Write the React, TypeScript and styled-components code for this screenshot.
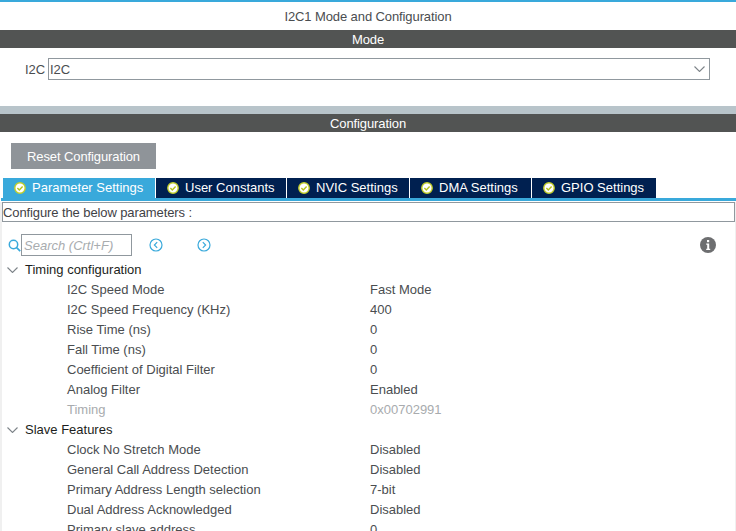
import styled, { createGlobalStyle } from "styled-components";

const GlobalStyle = createGlobalStyle`
    html, body {
        margin: 0;
        padding: 0;
        background: white;
    }
    body {
        font-family: "Liberation Sans", Arial, sans-serif;
        font-size: 13px;
        overflow: hidden;
    }
`

const tabs = [
    { label: "Parameter Settings", width: 152 },
    { label: "User Constants", width: 130 },
    { label: "NVIC Settings", width: 122 },
    { label: "DMA Settings", width: 121 },
    { label: "GPIO Settings", width: 124 },
];

const timingRows = [
    { name: "I2C Speed Mode", value: "Fast Mode" },
    { name: "I2C Speed Frequency (KHz)", value: "400" },
    { name: "Rise Time (ns)", value: "0" },
    { name: "Fall Time (ns)", value: "0" },
    { name: "Coefficient of Digital Filter", value: "0" },
    { name: "Analog Filter", value: "Enabled" },
    { name: "Timing", value: "0x00702991", muted: true },
];

const slaveRows = [
    { name: "Clock No Stretch Mode", value: "Disabled" },
    { name: "General Call Address Detection", value: "Disabled" },
    { name: "Primary Address Length selection", value: "7-bit" },
    { name: "Dual Address Acknowledged", value: "Disabled" },
    { name: "Primary slave address", value: "0" },
];

function CheckIcon() {
    return (
        <svg width="12" height="12" viewBox="0 0 12 12">
            <circle cx="6" cy="6" r="5.2" fill="white" stroke="#c3cf2a" strokeWidth="1.4" />
            <path d="M3.4 6l1.9 1.9 3.3-3.4" fill="none" stroke="#b5c21a" strokeWidth="1.4" />
        </svg>
    )
}

function Chevron() {
    return (
        <svg width="11" height="6" viewBox="0 0 11 6">
            <path d="M.5.5l5 5 5-5" fill="none" stroke="#7d8489" strokeWidth="1.1" />
        </svg>
    )
}

function NavIcon(props: { direction: "left" | "right" }) {
    return (
        <svg width="14" height="14" viewBox="0 0 14 14">
            <circle cx="7" cy="7" r="6" fill="none" stroke="#39a9db" strokeWidth="1.2" />
            <path d={props.direction === "left" ? "M8.2 4.2L5.4 7l2.8 2.8" : "M5.8 4.2L8.6 7l-2.8 2.8"} fill="none" stroke="#39a9db" strokeWidth="1.2" />
        </svg>
    )
}

function TreeGroup(props: { title: string, rows: { name: string, value: string, muted?: boolean }[] }) {
    return (
        <>
            <GroupRow>
                <GroupArrow><Chevron /></GroupArrow>
                {props.title}
            </GroupRow>
            {props.rows.map(row => (
                <ParamRow key={row.name} $muted={row.muted}>
                    <ParamName>{row.name}</ParamName>
                    <span>{row.value}</span>
                </ParamRow>
            ))}
        </>
    )
}

export default function App() {
    return (
        <Page>
            <GlobalStyle />
            <Title>I2C1 Mode and Configuration</Title>
            <SectionBar>Mode</SectionBar>
            <ModeRow>
                <ModeLabel>I2C</ModeLabel>
                <ModeSelect>
                    I2C
                    <Chevron />
                </ModeSelect>
            </ModeRow>
            <Divider />
            <SectionBar>Configuration</SectionBar>
            <ResetButton>Reset Configuration</ResetButton>
            <TabBar>
                {tabs.map((tab, i) => (
                    <Tab key={tab.label} $active={i === 0} $width={tab.width}>
                        <CheckIcon />
                        {tab.label}
                    </Tab>
                ))}
            </TabBar>
            <Panel>
                <HintBox>Configure the below parameters :</HintBox>
                <SearchRow>
                    <svg width="13" height="13" viewBox="0 0 13 13">
                        <circle cx="5.5" cy="5.5" r="4.2" fill="none" stroke="#39a9db" strokeWidth="1.5" />
                        <path d="M8.6 8.6l3.6 3.6" stroke="#39a9db" strokeWidth="1.7" />
                    </svg>
                    <SearchBox>Search (Crtl+F)</SearchBox>
                    <NavButtons>
                        <NavIcon direction="left" />
                        <NavIcon direction="right" />
                    </NavButtons>
                    <InfoIcon>
                        <svg width="16" height="16" viewBox="0 0 16 16">
                            <circle cx="8" cy="8" r="8" fill="#6d6e70" />
                            <rect x="7" y="3" width="2.2" height="2.2" fill="white" />
                            <path d="M6.2 6.6h3v5.2h1v1.2H6.2v-1.2h1V7.8h-1z" fill="white" />
                        </svg>
                    </InfoIcon>
                </SearchRow>
                <TreeGroup title="Timing configuration" rows={timingRows} />
                <TreeGroup title="Slave Features" rows={slaveRows} />
            </Panel>
        </Page>
    )
}

const Page = styled.div`
    width: 736px;
    height: 531px;
    overflow: hidden;
    box-sizing: border-box;
    border-top: 2px solid #39a9db;
    color: #4a4d50;
    background: white;
`

const Title = styled.div`
    height: 28px;
    line-height: 29px;
    text-align: center;
    letter-spacing: -0.1px;
`

const SectionBar = styled.div`
    height: 18px;
    line-height: 19px;
    background: #525453;
    color: white;
    text-align: center;
    letter-spacing: -0.1px;
`

const ModeRow = styled.div`
    height: 58px;
    display: flex;
    align-items: flex-start;
    padding: 10px 26px 0 25px;
    box-sizing: border-box;
`

const ModeLabel = styled.span`
    width: 23px;
    line-height: 23px;
`

const ModeSelect = styled.div`
    flex: 1;
    height: 22px;
    box-sizing: border-box;
    border: 1px solid #90989e;
    padding: 0 4px 0 1px;
    display: flex;
    align-items: center;
    justify-content: space-between;
`

const Divider = styled.div`
    height: 8px;
    background: #b8c4ca;
`

const ResetButton = styled.div`
    width: 145px;
    height: 26px;
    margin: 11px 0 9px 11px;
    background: #8f9499;
    color: white;
    line-height: 27px;
    text-align: center;
    letter-spacing: -0.1px;
`

const TabBar = styled.div`
    display: flex;
    height: 23px;
    margin-left: 1px;
    padding-left: 2px;
    border-bottom: 3px solid #39a9db;
    box-sizing: border-box;
`

const Tab = styled.div<{ $active?: boolean, $width: number }>`
    width: ${props => props.$width}px;
    height: 20px;
    box-sizing: border-box;
    display: flex;
    align-items: center;
    gap: 6px;
    padding: 0 0 1px 11px;
    margin-right: 1px;
    background: ${props => props.$active ? "#39a9db" : "#002050"};
    color: white;
    white-space: nowrap;
`

const Panel = styled.div`
    margin: 0 1px 0 2px;
    box-shadow: -2px 0 0 #f0f0f0, 1px 0 0 #f0f0f0;
    height: 400px;
`

const HintBox = styled.div`
    height: 20px;
    margin-top: 1px;
    box-sizing: border-box;
    border: 1px solid #90989e;
    line-height: 19px;
    padding-left: 0;
    letter-spacing: -0.1px;
    color: #3f4246;
`

const SearchRow = styled.div`
    height: 22px;
    margin: 12px 0 4px;
    display: flex;
    align-items: center;
    padding-left: 6px;
    position: relative;
`

const SearchBox = styled.div`
    width: 111px;
    height: 22px;
    box-sizing: border-box;
    border: 1px solid #90989e;
    padding-left: 2px;
    line-height: 21px;
    font-style: italic;
    color: #a8acaf;
`

const NavButtons = styled.div`
    display: flex;
    gap: 34px;
    margin-left: 17px;
`

const InfoIcon = styled.div`
    position: absolute;
    right: 19px;
    top: 3px;
    line-height: 0;
`

const GroupRow = styled.div`
    height: 20px;
    line-height: 20px;
    display: flex;
    color: #1c1e20;
    padding-left: 5px;
`

const GroupArrow = styled.span`
    width: 18px;
    line-height: 18px;
`

const ParamRow = styled.div<{ $muted?: boolean }>`
    height: 20px;
    line-height: 20px;
    display: flex;
    padding-left: 65px;
    color: ${props => props.$muted ? "#a8abae" : "#4a4d50"};
`

const ParamName = styled.span`
    width: 303px;
    flex-shrink: 0;
`
